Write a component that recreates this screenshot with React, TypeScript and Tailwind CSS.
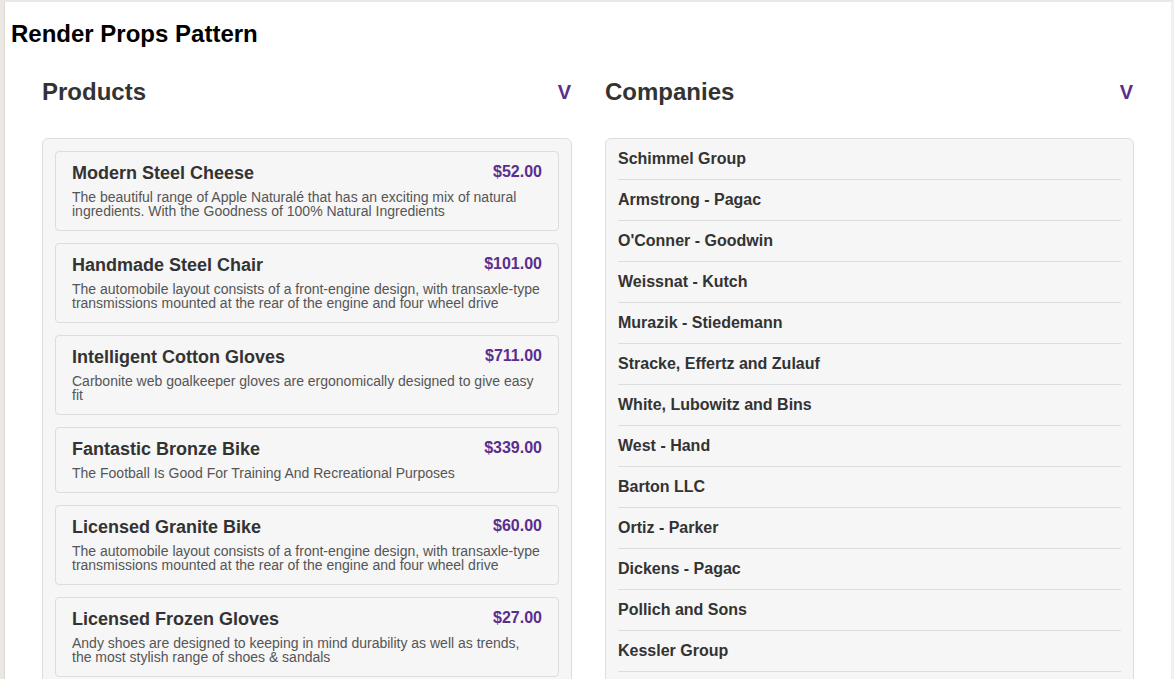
import React from "react";

const products = [
  { name: "Modern Steel Cheese", price: "$52.00", desc: "The beautiful range of Apple Naturalé that has an exciting mix of natural ingredients. With the Goodness of 100% Natural Ingredients" },
  { name: "Handmade Steel Chair", price: "$101.00", desc: "The automobile layout consists of a front-engine design, with transaxle-type transmissions mounted at the rear of the engine and four wheel drive" },
  { name: "Intelligent Cotton Gloves", price: "$711.00", desc: "Carbonite web goalkeeper gloves are ergonomically designed to give easy fit" },
  { name: "Fantastic Bronze Bike", price: "$339.00", desc: "The Football Is Good For Training And Recreational Purposes" },
  { name: "Licensed Granite Bike", price: "$60.00", desc: "The automobile layout consists of a front-engine design, with transaxle-type transmissions mounted at the rear of the engine and four wheel drive" },
  { name: "Licensed Frozen Gloves", price: "$27.00", desc: "Andy shoes are designed to keeping in mind durability as well as trends, the most stylish range of shoes & sandals" },
  { name: "Sleek Wooden Shirt", price: "$84.00", desc: "New range of formal shirts are designed keeping you in mind. With fits and styling that will make you stand apart" },
];

const companies = [
  "Schimmel Group",
  "Armstrong - Pagac",
  "O'Conner - Goodwin",
  "Weissnat - Kutch",
  "Murazik - Stiedemann",
  "Stracke, Effertz and Zulauf",
  "White, Lubowitz and Bins",
  "West - Hand",
  "Barton LLC",
  "Ortiz - Parker",
  "Dickens - Pagac",
  "Pollich and Sons",
  "Kessler Group",
  "Hahn - Rolfson",
];

function Header({ title }: { title: string }) {
  return (
    <div className="flex items-center justify-between h-[28px] mt-[58px] mb-[32px]">
      <h2 className="text-[24px] leading-[28px] font-bold text-[#333]">{title}</h2>
      <span className="text-[20px] leading-[28px] font-bold text-[#5b2d8e] pr-[1px]">V</span>
    </div>
  );
}

export default function App() {
  return (
    <div
      className="h-[679px] overflow-hidden bg-white border-l-[4px] border-t-[2px] border-r-[3px] border-l-[#ebe7e3] border-t-[#ebe7e3] border-r-[#f0f0f0]"
      style={{ fontFamily: '"Liberation Sans", Arial, sans-serif' }}
    >
      <div className="border-l border-l-[#dcd8d4] h-full">
        <h1 className="pl-[6px] pt-[18px] text-[24px] leading-[28px] font-bold text-black">Render Props Pattern</h1>
        <div className="flex gap-[33px] pl-[37px]">
          <div className="w-[530px]">
            <div className="-mt-[28px]">
              <Header title="Products" />
            </div>
            <div className="bg-[#f6f6f6] border border-[#dddddd] rounded-[6px] p-[12px] flex flex-col gap-[12px]">
              {products.map((p) => (
                <div key={p.name} className="bg-[#f6f6f6] border border-[#dddddd] rounded-[4px] px-[16px] pt-[10px] pb-[12px]">
                  <div className="flex justify-between items-start">
                    <div className="text-[18px] leading-[22px] font-bold text-[#333]">{p.name}</div>
                    <div className="text-[16px] leading-[20px] font-bold text-[#5b2d8e]">{p.price}</div>
                  </div>
                  <div className="mt-[6px] text-[14px] leading-[14px] text-[#555]">{p.desc}</div>
                </div>
              ))}
            </div>
          </div>
          <div className="w-[529px]">
            <div className="-mt-[28px]">
              <Header title="Companies" />
            </div>
            <div className="bg-[#f6f6f6] border border-[#dddddd] rounded-[6px] px-[12px]">
              {companies.map((c) => (
                <div key={c} className="border-b border-[#dddddd] py-[11px] text-[16px] leading-[18px] font-bold text-[#333]">
                  {c}
                </div>
              ))}
            </div>
          </div>
        </div>
      </div>
    </div>
  );
}
